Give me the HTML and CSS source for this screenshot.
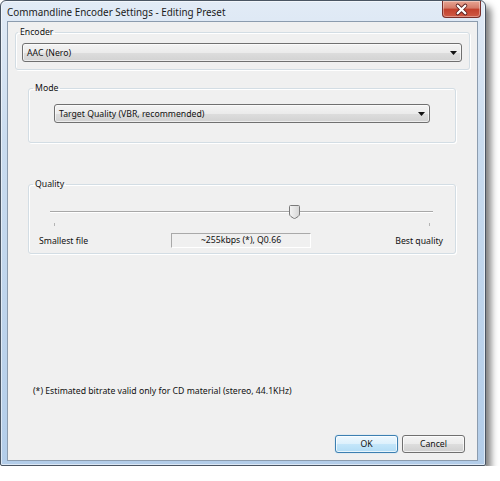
FILE: index.html
```html
<!DOCTYPE html>
<html lang="en">
<head>
    <meta charset="UTF-8">
    <title>Commandline Encoder Settings - Editing Preset</title>
    <link rel="stylesheet" href="styles.css">
</head>
<body>
    <div class="window">
        <div class="titlebar">
            <span class="title">Commandline Encoder Settings - Editing Preset</span>
            <button class="close" aria-label="Close">
                <svg viewBox="0 0 39 17" width="39" height="17">
                    <path d="M15.5 4.5 L23.5 12.5 M23.5 4.5 L15.5 12.5" stroke="#5a2020" stroke-width="4.2" stroke-linecap="round"></path>
                    <path d="M15.5 4.5 L23.5 12.5 M23.5 4.5 L15.5 12.5" stroke="#ffffff" stroke-width="2.4" stroke-linecap="round"></path>
                </svg>
            </button>
        </div>

        <div class="client">
            <fieldset class="group encoder">
                <legend>Encoder</legend>
                <div class="combo">
                    <span>AAC (Nero)</span>
                    <svg class="arrow" viewBox="0 0 7 4" width="7" height="4"><path d="M0 0 H7 L3.5 4 Z"></path></svg>
                </div>
            </fieldset>

            <fieldset class="group mode">
                <legend>Mode</legend>
                <div class="combo">
                    <span>Target Quality (VBR, recommended)</span>
                    <svg class="arrow" viewBox="0 0 7 4" width="7" height="4"><path d="M0 0 H7 L3.5 4 Z"></path></svg>
                </div>
            </fieldset>

            <fieldset class="group quality">
                <legend>Quality</legend>
                <div class="slider">
                    <div class="track"></div>
                    <span class="tick tick-min"></span>
                    <span class="tick tick-max"></span>
                    <svg class="thumb" viewBox="0 0 11 14" width="11" height="14">
                        <defs>
                            <linearGradient id="thumbFill" x1="0" y1="0" x2="1" y2="0">
                                <stop offset="0" stop-color="#f4f4f4"></stop>
                                <stop offset="1" stop-color="#d6d6d6"></stop>
                            </linearGradient>
                        </defs>
                        <path d="M1.5 0.5 H9.5 Q10.5 0.5 10.5 1.5 V9 Q10.5 10.5 9 11.6 L6.3 13.3 Q5.5 13.7 4.7 13.3 L2 11.6 Q0.5 10.5 0.5 9 V1.5 Q0.5 0.5 1.5 0.5 Z" fill="url(#thumbFill)" stroke="#7a7a7a"></path>
                    </svg>
                </div>
                <div class="scale">
                    <span>Smallest file</span>
                    <div class="value">~255kbps (*), Q0.66</div>
                    <span class="best">Best quality</span>
                </div>
            </fieldset>

            <p class="note">(*) Estimated bitrate valid only for CD material (stereo, 44.1KHz)</p>

            <div class="buttons">
                <button class="btn default">OK</button>
                <button class="btn">Cancel</button>
            </div>
        </div>
    </div>
</body>
</html>
```

FILE: styles.css
```css
* {
    box-sizing: border-box;
}

body {
    margin: 0;
    background: #ffffff;
    font-family: 'Noto Sans', 'Open Sans', sans-serif;
    font-size: 8.7px;
    color: #111111;
}

.window {
    width: 486px;
    height: 466px;
    border: 1px solid #4a5563;
    border-radius: 6px 6px 2px 2px;
    background: linear-gradient(to bottom, #e2ebf6 0%, #cadcef 30%, #b3cde9 100%);
    box-shadow: inset 0 0 0 1px rgba(255, 255, 255, 0.55), 5px 6px 7px rgba(0, 0, 0, 0.5);
}

.titlebar {
    display: flex;
    align-items: flex-start;
    height: 20px;
}

.title {
    padding: 1px 0 0 6px;
    line-height: 20px;
    font-size: 9.9px;
    color: #1a1a1a;
}

.close {
    margin: 0 4px 0 auto;
    width: 39px;
    height: 17px;
    padding: 0;
    border: 1px solid #7a2f2a;
    border-top: none;
    border-radius: 0 0 4px 4px;
    background: linear-gradient(to bottom, #e8a593 0%, #d47a68 45%, #c2402c 50%, #cf5a45 100%);
    box-shadow: inset 0 0 0 1px rgba(255, 255, 255, 0.35);
    display: flex;
}

.client {
    margin: 0 7px 4px 6px;
    height: 440px;
    border: 1px solid #8c9cae;
    background: #f0f0f0;
    display: flex;
    flex-direction: column;
}

/* group boxes: legend sits 4px in, contents get their own left margin */
.group {
    margin: 0;
    padding-left: 0;
    padding-right: 0;
    border: 1px solid #d3dde4;
    border-radius: 3px;
    box-shadow: inset 1px 1px 0 #ffffff, 1px 1px 0 #ffffff;
}

.group legend {
    margin-left: 4px;
    padding: 0 2px;
    line-height: 16px;
}

.encoder {
    margin: 2px 0 0 7px;
    width: 455px;
    padding-top: 3px;
    padding-bottom: 7px;
}

.encoder legend {
    margin-left: 2px;
}

.mode {
    margin: 10px 0 0 20px;
    width: 428px;
    padding-top: 8px;
    padding-bottom: 19px;
}

.combo {
    display: flex;
    align-items: center;
    justify-content: space-between;
    height: 19px;
    padding: 0 4px 0 4px;
    border: 1px solid #707070;
    border-radius: 3px;
    background: linear-gradient(to bottom, #f4f4f4 0%, #ebebeb 50%, #dddddd 51%, #d2d2d2 100%);
    box-shadow: inset 0 0 0 1px rgba(255, 255, 255, 0.6);
}

.encoder .combo {
    width: 440px;
    margin-left: 6px;
}

.mode .combo {
    width: 376px;
    margin-left: 25px;
}

.arrow {
    fill: #111111;
}

.quality {
    margin: 33px 0 0 20px;
    width: 428px;
    padding-top: 6px;
    padding-bottom: 5px;
}

.slider {
    position: relative;
    height: 30px;
    margin: 0 22px 0 21px;
}

.track {
    position: absolute;
    left: 0;
    right: 0;
    top: 13px;
    height: 2px;
    border-top: 1px solid #a8a8a8;
    border-bottom: 1px solid #ffffff;
}

.tick {
    position: absolute;
    top: 25px;
    width: 1px;
    height: 3px;
    background: #b4b4b4;
}

.tick-min {
    left: 4px;
}

.tick-max {
    right: 3px;
}

.thumb {
    position: absolute;
    left: 239px;
    top: 7px;
}

.scale {
    display: grid;
    grid-template-columns: 1fr 140px 1fr;
    align-items: center;
    height: 15px;
    margin: 5px 12px 0 10px;
}

.scale .best {
    justify-self: end;
}

.value {
    height: 15px;
    line-height: 13px;
    text-align: center;
    border: 1px solid;
    border-color: #a9a9a9 #ffffff #ffffff #a9a9a9;
}

.note {
    margin: 129px 0 0 25px;
    line-height: 16px;
}

.buttons {
    display: flex;
    justify-content: flex-end;
    gap: 4px;
    margin-top: 36px;
    padding-right: 12px;
}

.btn {
    width: 63px;
    height: 18px;
    padding: 0;
    border: 1px solid #707070;
    border-radius: 3px;
    background: linear-gradient(to bottom, #f4f4f4 0%, #ebebeb 50%, #dddddd 51%, #d0d0d0 100%);
    box-shadow: inset 0 0 0 1px rgba(255, 255, 255, 0.7);
    font-family: inherit;
    font-size: inherit;
    color: #111111;
}

.btn.default {
    border-color: #3c7fb1;
    background: linear-gradient(to bottom, #eef8fe 0%, #dcf0fc 50%, #c4e6fa 51%, #b2dcf5 100%);
    box-shadow: inset 0 0 0 1px rgba(255, 255, 255, 0.7), 0 0 1px #6ab8e8;
}
```
